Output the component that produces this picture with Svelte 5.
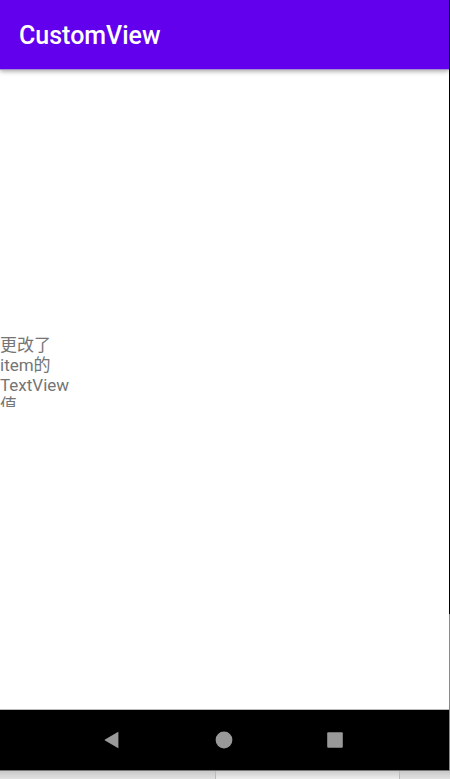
<script>
  const title = 'CustomView';
  const itemText = '更改了item的TextView值';
</script>

<div class="screen">
  <div class="device">
    <header><h1>{title}</h1></header>
    <main>
      <p class="item">{itemText}</p>
    </main>
    <nav aria-label="System navigation">
      <button aria-label="Back">
        <svg width="18" height="18" viewBox="0 0 18 18"><path d="M15.4 1.2V16.8Q15.4 17.4 14.8 17L2 9.6Q1.2 9 2 8.4L14.8 1Q15.4 .6 15.4 1.2Z" /></svg>
      </button>
      <button aria-label="Home">
        <svg width="18" height="18" viewBox="0 0 18 18"><circle cx="9" cy="9" r="8.4" /></svg>
      </button>
      <button aria-label="Overview">
        <svg width="18" height="18" viewBox="0 0 18 18"><rect x="1.2" y="1.2" width="15.6" height="15.6" rx="1" /></svg>
      </button>
    </nav>
  </div>
  <div class="edge"></div>
  <footer><span></span><span></span><span></span></footer>
</div>

<style>
  :global(body) {
    margin: 0;
    background: #fff;
  }
  .screen {
    display: grid;
    grid-template-columns: 1fr 1px;
    grid-template-rows: 1fr auto;
    min-height: 100vh;
    font-family: Roboto, "Noto Sans CJK SC", sans-serif;
  }
  .device {
    display: flex;
    flex-direction: column;
    border-bottom: 1px solid #777;
  }
  header {
    position: relative;
    display: flex;
    align-items: center;
    height: 70px;
    padding: 0 19px;
    box-sizing: border-box;
    background: #6200ee;
    border-bottom: 1px solid #a68fd0;
    box-shadow: 0 1px 5px rgba(0, 0, 0, 0.4);
    clip-path: inset(0 0 -8px 0);
  }
  h1 {
    margin: 0;
    padding-top: 3px;
    color: #fff;
    font-size: 25px;
    line-height: 32px;
    font-weight: 500;
  }
  main {
    flex: 1;
    display: flex;
    align-items: center;
    background: #fff;
  }
  .item {
    width: 72px;
    height: 72px;
    margin: 0 0 38px;
    overflow: hidden;
    color: #757575;
    font-size: 17px;
    line-height: 20px;
  }
  nav {
    display: flex;
    justify-content: center;
    height: 60px;
    padding-right: 2px;
    border-top: 1px solid #bbb;
    background: #000;
  }
  button {
    display: flex;
    align-items: center;
    justify-content: center;
    width: 25%;
    padding: 0;
    border: 0;
    background: none;
  }
  svg {
    display: block;
    fill: #999;
  }
  .edge {
    background: linear-gradient(#000 79.6%, #888 79.6%);
  }
  footer {
    grid-column: 1 / -1;
    display: flex;
    height: 8px;
    background: linear-gradient(#c8c8c8, #e2e2e2);
  }
  footer span {
    flex: 215;
  }
  footer span:nth-child(2) {
    flex: 183;
    border: solid #bbb;
    border-width: 0 1px;
    background: linear-gradient(#ccc, #eee);
  }
  footer span:last-child {
    flex: 50;
  }
</style>
